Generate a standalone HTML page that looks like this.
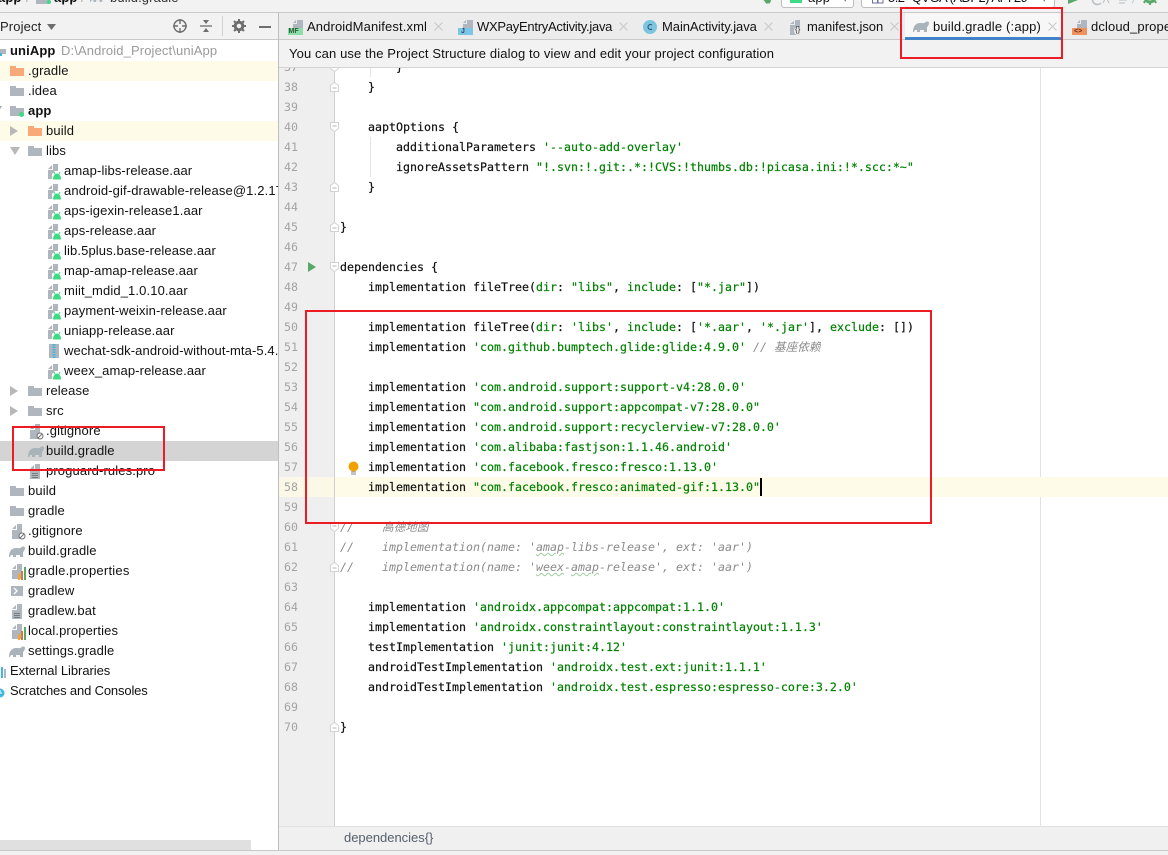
<!DOCTYPE html>
<html><head><meta charset="utf-8"><title>build.gradle</title>
<style>
html,body{margin:0;padding:0}
body{width:1168px;height:855px;overflow:hidden;position:relative;background:#fff;font-family:"Liberation Sans","Noto Sans CJK SC",sans-serif;font-size:13px;color:#111;letter-spacing:.12px}
.a{position:absolute}
.t{position:absolute;white-space:pre;line-height:16px}
svg{position:absolute;overflow:visible}
.row{position:absolute;left:0;width:278px;height:20px;line-height:20px;white-space:pre}
.row span{position:absolute;top:0}
.mono{font-family:"DejaVu Sans Mono","Noto Sans CJK SC",monospace;font-size:11.63px;letter-spacing:0}
#code{position:absolute;line-height:20px;white-space:pre;color:#111;-webkit-text-stroke:.2px currentColor}
#nums{position:absolute;line-height:20px;white-space:pre;color:#a3a3a3}
#code i{color:#8a8a8a;-webkit-text-stroke:0}
#code b{font-weight:normal;color:#008000}
.sq{text-decoration:underline wavy #9fce9f 1px}
.box{position:absolute;border:2px solid #ed1c24;box-sizing:border-box}
</style></head><body>
<svg width="0" height="0" style="position:absolute">
<defs>
<symbol id="folder" viewBox="0 0 14 10"><path d="M0 0h6v2h8v8H0z" fill="#afb6bd"/></symbol>
<symbol id="ofolder" viewBox="0 0 14 10"><path d="M0 0h6v2h8v8H0z" fill="#f9a878"/></symbol>
<symbol id="aar" viewBox="0 0 13 16"><path d="M0 5 4 1v4zM5 0h5v7H7L4 10v5H0V6h5z" fill="#afb6bd"/><path d="M5 15.500c0-4 2-6 4-6s4 2 4 6z" fill="#3ddc84"/><path d="M6 8l1 2M12 8l-1 2" stroke="#3ddc84"/></symbol>
<symbol id="doc" viewBox="0 0 12 16"><path d="M0 5 4 1v4zM5 0h5v15H0V6h5z" fill="#afb6bd"/><path d="M2 9.500h6M2 11.500h6M2 13.500h6" stroke="#666" stroke-width=".7"/></symbol>
<symbol id="ign" viewBox="0 0 14 16"><path d="M0 5 4 1v4zM5 0h5v10H8v5H0V6h5z" fill="#afb6bd"/><circle cx="10" cy="12" r="3" fill="#fff" stroke="#6e6e6e" stroke-width="1"/><path d="M8 14l4-4" stroke="#6e6e6e"/></symbol>
<symbol id="prop" viewBox="0 0 14 16"><path d="M0 5 4 1v4zM5 0h5v15H0V6h5z" fill="#afb6bd"/><path d="M6 10h2v6H6z" fill="#f4a13a"/><path d="M9 7h2v9H9z" fill="#e0752d"/><path d="M12 3h2v13h-2z" fill="#59a869"/></symbol>
<symbol id="ele" viewBox="0 0 16 11"><path d="M0 11C0 5 3 2 7 2c3 0 4 .5 5-.5s3-1.500 4 0c0 2-1 4-2 4.500v5h-3V9H7v2H4V9H2l-1 2z" fill="#a9b3ba"/></symbol>
<symbol id="cl" viewBox="0 0 9 9"><path d="M.5.5l8 8M8.5.5l-8 8" stroke="#c8c8c8" stroke-width="1" fill="none"/></symbol>
<symbol id="fs" viewBox="0 0 9 10"><path d="M.5.5h8v6l-4 3-4-3z" fill="#fff" stroke="#d2d2d2"/><path d="M2.500 4h4" stroke="#b5b5b5"/></symbol>
<symbol id="fe" viewBox="0 0 9 10"><path d="M.5 9.500h8v-6l-4-3-4 3z" fill="#fff" stroke="#d2d2d2"/><path d="M2.500 6h4" stroke="#b5b5b5"/></symbol>
</defs></svg>

<!-- top bar -->
<div class="a" style="left:0;top:0;width:1168px;height:12px;background:#f2f2f2"></div>
<div class="a" style="left:0;top:0;width:1168px;height:12px;overflow:hidden">
<div class="t" style="left:-2px;top:-10px;font-weight:bold">app</div>
<div class="t" style="left:26px;top:-10px;color:#aaa">/</div>
<svg style="left:36px;top:-6px" width="14" height="10"><use href="#folder"/></svg>
<svg style="left:47px;top:0" width="4" height="4"><circle cx="2" cy="2" r="2" fill="#3ddc84"/></svg>
<div class="t" style="left:54px;top:-10px;font-weight:bold">app</div>
<div class="t" style="left:81px;top:-10px;color:#aaa">/</div>
<svg style="left:90px;top:-8px" width="14" height="10"><use href="#ele"/></svg>
<div class="t" style="left:110px;top:-10px;color:#333">build.gradle</div>
<svg style="left:762px;top:-3px" width="10" height="8"><path d="M1 0l4 5 3-2-2 3" stroke="#59a869" stroke-width="3" fill="none"/></svg>
<div class="a" style="left:781px;top:-6px;width:73px;height:14px;border:1px solid #bdbdbd;border-radius:3px;background:#fff;box-sizing:border-box"></div>
<div class="a" style="left:790px;top:-4px;width:12px;height:7px;background:#3ddc84"></div>
<div class="t" style="left:808px;top:-10px">app</div>
<div class="t" style="left:842px;top:-10px;color:#777">▾</div>
<div class="a" style="left:861px;top:-6px;width:194px;height:14px;border:1px solid #bdbdbd;border-radius:3px;background:#fff;box-sizing:border-box"></div>
<svg style="left:872px;top:-3px" width="12" height="7"><path d="M.5-3h5v9h-5zM6 1h5v5H6z" stroke="#6e6e9e" fill="none"/></svg>
<div class="t" style="left:888px;top:-10px;letter-spacing:-.52px">5.2" QVGA (ADP2) API 29</div>
<div class="t" style="left:1041px;top:-10px;color:#777">▾</div>
<svg style="left:1068px;top:-3px" width="11" height="8"><path d="M0-2l10 5L0 7z" fill="#59a869"/></svg>
<svg style="left:1092px;top:-3px" width="20" height="8"><path d="M9-1a5 5 0 1 0 0 7" stroke="#b9bec2" stroke-width="1.600" fill="none"/><path d="M11 6l3-6 3 6" stroke="#b9bec2" fill="none"/></svg>
<svg style="left:1119px;top:-3px" width="18" height="8"><path d="M0 0h10M0 3h8M0 6h6" stroke="#c4c9cc" stroke-width="1.200"/><path d="M13 1a3 3 0 0 1 0 5" stroke="#c4c9cc" fill="none"/></svg>
<svg style="left:1144px;top:-3px" width="13" height="8"><circle cx="6" cy="0" r="5" fill="none" stroke="#59a869" stroke-width="3"/><path d="M6 6v2M1 4l-1 2M11 4l1 2" stroke="#59a869" stroke-width="2"/></svg>
</div>
<div class="a" style="left:0;top:12px;width:1168px;height:1px;background:#c9c9c9"></div>

<!-- project panel -->
<div class="a" style="left:0;top:13px;width:278px;height:26px;background:#f2f2f2"></div>
<div class="a" style="left:0;top:39px;width:278px;height:1px;background:#c9c9c9"></div>
<div class="t" style="left:0;top:19px;color:#222">Project</div>
<svg style="left:47px;top:24px" width="9" height="6"><path d="M0 0h9L4.500 6z" fill="#6e6e6e"/></svg>
<svg style="left:173px;top:19px" width="14" height="14"><circle cx="7" cy="7" r="6" fill="none" stroke="#6e6e6e" stroke-width="1.400"/><path d="M7 0v5M7 9v5M0 7h5M9 7h5" stroke="#6e6e6e" stroke-width="1.400"/></svg>
<svg style="left:200px;top:19px" width="12" height="14"><path d="M0 7h12" stroke="#6e6e6e" stroke-width="1.300"/><path d="M3 1h6L6 5zM3 13h6L6 9z" fill="#6e6e6e"/></svg>
<div class="a" style="left:222px;top:16px;width:1px;height:20px;background:#d0d0d0"></div>
<svg style="left:232px;top:19px" width="14" height="14"><circle cx="7" cy="7" r="3.800" fill="none" stroke="#6e6e6e" stroke-width="3"/><path d="M7 0v3M7 11v3M0 7h3M11 7h3M2 2l2 2M10 10l2 2M12 2l-2 2M4 10l-2 2" stroke="#6e6e6e" stroke-width="2"/></svg>
<div class="a" style="left:259px;top:26px;width:12px;height:1.500px;background:#6e6e6e"></div>

<div class="a" style="left:0;top:40px;width:278px;height:810px;background:#fff;overflow:hidden">
<div class="a" style="left:0;top:21px;width:278px;height:20px;background:#fefce9"></div>
<div class="a" style="left:0;top:81px;width:278px;height:20px;background:#fefce9"></div>
<div class="a" style="left:0;top:401px;width:278px;height:20px;background:#d4d4d4"></div>
<div class="a" style="left:0;top:800px;width:251px;height:10px;background:#e0e0e0"></div>

<svg style="left:-5px;top:7px" width="12" height="10"><path d="M0 0h5v2h6v5H0z" fill="#afb6bd"/><path d="M0 6h7v3H0z" fill="#40b6e0"/></svg>
<div class="row" style="top:1px"><span style="left:10px;font-weight:bold">uniApp</span><span style="left:61px;color:#9a9a9a">D:\Android_Project\uniApp</span></div>
<svg style="left:10px;top:26px" width="14" height="10"><use href="#ofolder"/></svg>
<div class="row" style="top:21px"><span style="left:28px">.gradle</span></div>
<svg style="left:10px;top:46px" width="14" height="10"><use href="#folder"/></svg>
<div class="row" style="top:41px"><span style="left:28px">.idea</span></div>
<svg style="left:10px;top:66px" width="14" height="10"><use href="#folder"/></svg>
<svg style="left:19px;top:72px" width="5" height="5"><circle cx="2.500" cy="2.500" r="2.500" fill="#3ddc84"/></svg>
<svg style="left:-3px;top:66px" width="6" height="6"><path d="M0 0h5L2.500 4z" fill="#aaa"/></svg>
<div class="row" style="top:61px"><span style="left:28px;font-weight:bold">app</span></div>
<svg style="left:10px;top:86px" width="8" height="10"><path d="M0 0l8 5-8 5z" fill="#b8b8b8"/></svg>
<svg style="left:28px;top:86px" width="14" height="10"><use href="#ofolder"/></svg>
<div class="row" style="top:81px"><span style="left:46px">build</span></div>
<svg style="left:10px;top:107px" width="10" height="8"><path d="M0 0h10L5 8z" fill="#b8b8b8"/></svg>
<svg style="left:28px;top:106px" width="14" height="10"><use href="#folder"/></svg>
<div class="row" style="top:101px"><span style="left:46px">libs</span></div>

<svg style="left:48px;top:124px" width="13" height="16"><use href="#aar"/></svg><div class="row" style="top:121px"><span style="left:64px">amap-libs-release.aar</span></div>
<svg style="left:48px;top:144px" width="13" height="16"><use href="#aar"/></svg><div class="row" style="top:141px"><span style="left:64px">android-gif-drawable-release@1.2.17.aar</span></div>
<svg style="left:48px;top:164px" width="13" height="16"><use href="#aar"/></svg><div class="row" style="top:161px"><span style="left:64px">aps-igexin-release1.aar</span></div>
<svg style="left:48px;top:184px" width="13" height="16"><use href="#aar"/></svg><div class="row" style="top:181px"><span style="left:64px">aps-release.aar</span></div>
<svg style="left:48px;top:204px" width="13" height="16"><use href="#aar"/></svg><div class="row" style="top:201px"><span style="left:64px">lib.5plus.base-release.aar</span></div>
<svg style="left:48px;top:224px" width="13" height="16"><use href="#aar"/></svg><div class="row" style="top:221px"><span style="left:64px">map-amap-release.aar</span></div>
<svg style="left:48px;top:244px" width="13" height="16"><use href="#aar"/></svg><div class="row" style="top:241px"><span style="left:64px">miit_mdid_1.0.10.aar</span></div>
<svg style="left:48px;top:264px" width="13" height="16"><use href="#aar"/></svg><div class="row" style="top:261px"><span style="left:64px">payment-weixin-release.aar</span></div>
<svg style="left:48px;top:284px" width="13" height="16"><use href="#aar"/></svg><div class="row" style="top:281px"><span style="left:64px">uniapp-release.aar</span></div>
<svg style="left:49px;top:304px" width="11" height="14"><path d="M0 0h10v14H0z" fill="#afb6bd"/><path d="M5 0v14" stroke="#40b6e0" stroke-width="3" stroke-dasharray="1.500 1"/></svg><div class="row" style="top:301px"><span style="left:64px;letter-spacing:.1px">wechat-sdk-android-without-mta-5.4.0.jar</span></div>
<svg style="left:48px;top:324px" width="13" height="16"><use href="#aar"/></svg><div class="row" style="top:321px"><span style="left:64px">weex_amap-release.aar</span></div>

<svg style="left:10px;top:346px" width="8" height="10"><path d="M0 0l8 5-8 5z" fill="#b8b8b8"/></svg>
<svg style="left:28px;top:346px" width="14" height="10"><use href="#folder"/></svg>
<div class="row" style="top:341px"><span style="left:46px">release</span></div>
<svg style="left:10px;top:366px" width="8" height="10"><path d="M0 0l8 5-8 5z" fill="#b8b8b8"/></svg>
<svg style="left:28px;top:366px" width="14" height="10"><use href="#folder"/></svg>
<div class="row" style="top:361px"><span style="left:46px">src</span></div>
<svg style="left:30px;top:384px" width="14" height="16"><use href="#ign"/></svg>
<div class="row" style="top:381px"><span style="left:46px">.gitignore</span></div>
<svg style="left:28px;top:406px" width="16" height="11"><use href="#ele"/></svg>
<div class="row" style="top:401px"><span style="left:46px">build.gradle</span></div>
<svg style="left:30px;top:424px" width="12" height="16"><use href="#doc"/></svg>
<div class="row" style="top:421px"><span style="left:46px">proguard-rules.pro</span></div>

<svg style="left:10px;top:446px" width="14" height="10"><use href="#folder"/></svg>
<div class="row" style="top:441px"><span style="left:28px">build</span></div>
<svg style="left:10px;top:466px" width="14" height="10"><use href="#folder"/></svg>
<div class="row" style="top:461px"><span style="left:28px">gradle</span></div>
<svg style="left:12px;top:484px" width="14" height="16"><use href="#ign"/></svg>
<div class="row" style="top:481px"><span style="left:28px">.gitignore</span></div>
<svg style="left:9px;top:506px" width="16" height="11"><use href="#ele"/></svg>
<div class="row" style="top:501px"><span style="left:28px">build.gradle</span></div>
<svg style="left:12px;top:524px" width="14" height="16"><use href="#prop"/></svg>
<div class="row" style="top:521px"><span style="left:28px;letter-spacing:.24px">gradle.properties</span></div>
<svg style="left:11px;top:546px" width="12" height="10"><path d="M0 0h12v10H0z" fill="#afb6bd"/><path d="M3 2l3 3-3 3" stroke="#fff" stroke-width="1.300" fill="none"/></svg>
<div class="row" style="top:541px"><span style="left:28px">gradlew</span></div>
<svg style="left:12px;top:564px" width="12" height="16"><use href="#doc"/></svg>
<div class="row" style="top:561px"><span style="left:28px">gradlew.bat</span></div>
<svg style="left:12px;top:584px" width="14" height="16"><use href="#prop"/></svg>
<div class="row" style="top:581px"><span style="left:28px">local.properties</span></div>
<svg style="left:9px;top:606px" width="16" height="11"><use href="#ele"/></svg>
<div class="row" style="top:601px"><span style="left:28px">settings.gradle</span></div>
<svg style="left:1px;top:626px" width="5" height="12"><path d="M0 1h2v11H0z" fill="#40b6e0"/><path d="M3 3h2v9H3z" fill="#afb6bd"/></svg>
<div class="row" style="top:621px"><span style="left:10px;letter-spacing:-.05px">External Libraries</span></div>
<svg style="left:-3px;top:647px" width="10" height="11"><circle cx="3" cy="6" r="4.500" fill="#40b6e0"/><path d="M3 3v3h2" stroke="#fff" fill="none"/></svg>
<div class="row" style="top:641px"><span style="left:10px;letter-spacing:-.15px">Scratches and Consoles</span></div>
</div>
<div class="a" style="left:278px;top:13px;width:1px;height:837px;background:#bdbdbd"></div>

<!-- tabs -->
<div class="a" style="left:279px;top:13px;width:889px;height:26px;background:#ececec"></div>
<div class="a" style="left:905px;top:13px;width:157px;height:24px;background:#f7f7f7"></div>
<div class="a" style="left:905px;top:37px;width:157px;height:3px;background:#4083c9"></div>
<div class="a" style="left:279px;top:39px;width:626px;height:1px;background:#c9c9c9"></div>
<div class="a" style="left:1062px;top:39px;width:106px;height:1px;background:#c9c9c9"></div>

<svg style="left:288px;top:20px" width="15" height="15"><path d="M5 3 8 0v3zM9 0h6v8H5V4h4z" fill="#afb6bd"/><path d="M0 8h15v7H0z" fill="#8ddda8"/></svg>
<div class="t" style="left:288.500px;top:28px;font-size:7px;font-weight:bold;color:#2a5a3a;letter-spacing:0;line-height:8px">MF</div>
<div class="t" style="left:307px;top:19px">AndroidManifest.xml</div>
<svg style="left:434px;top:22px" width="9" height="9"><use href="#cl"/></svg>
<svg style="left:458px;top:20px" width="15" height="15"><path d="M5 3 8 0v3zM9 0h6v8H5V4h4z" fill="#afb6bd"/><path d="M0 8h15v7H0z" fill="#7cc5e5"/></svg>
<div class="t" style="left:461px;top:28px;font-size:7px;font-weight:bold;color:#24506a;letter-spacing:0;line-height:8px">J</div>
<div class="t" style="left:477px;top:19px;letter-spacing:-.27px">WXPayEntryActivity.java</div>
<svg style="left:619px;top:22px" width="9" height="9"><use href="#cl"/></svg>
<svg style="left:643px;top:20px" width="14" height="14"><circle cx="7" cy="7" r="7" fill="#7cc5e0"/><path d="M9 5a2.500 2.500 0 1 0 0 4" stroke="#2b5a70" stroke-width="1.100" fill="none"/></svg>
<div class="t" style="left:662px;top:19px;letter-spacing:-.06px">MainActivity.java</div>
<svg style="left:764px;top:22px" width="9" height="9"><use href="#cl"/></svg>
<svg style="left:790px;top:20px" width="13" height="15"><path d="M0 4 4 1v3zM5 0h5v15H0V5h5z" fill="#afb6bd"/><circle cx="8" cy="11" r="4" fill="#ececec"/></svg>
<div class="t" style="left:795px;top:24px;font-size:8px;letter-spacing:0;color:#333;line-height:12px">{}</div>
<div class="t" style="left:807px;top:19px;letter-spacing:-.03px">manifest.json</div>
<svg style="left:890px;top:22px" width="9" height="9"><use href="#cl"/></svg>
<svg style="left:913px;top:21px" width="16" height="11"><use href="#ele"/></svg>
<div class="t" style="left:933px;top:19px;letter-spacing:.17px">build.gradle (:app)</div>
<svg style="left:1048px;top:22px" width="9" height="9"><use href="#cl"/></svg>
<svg style="left:1072px;top:20px" width="15" height="15"><path d="M5 3 8 0v3zM9 0h6v8H5V4h4z" fill="#afb6bd"/><path d="M0 8h15v7H0z" fill="#f0905a"/></svg>
<div class="t" style="left:1074px;top:28px;font-size:7px;font-weight:bold;color:#5a2a10;letter-spacing:0;line-height:8px">&lt;&gt;</div>
<div class="a" style="left:1091px;top:13px;width:77px;height:26px;overflow:hidden"><div class="t" style="left:0;top:6px">dcloud_properties.xml</div></div>

<!-- notification -->
<div class="a" style="left:279px;top:40px;width:889px;height:27px;background:#f2f2f2"></div>
<div class="a" style="left:279px;top:67px;width:889px;height:1px;background:#d4d4d4"></div>
<div class="t" style="left:289px;top:46px">You can use the Project Structure dialog to view and edit your project configuration</div>

<!-- editor -->
<div class="a" style="left:279px;top:68px;width:55px;height:758px;background:#efefef"></div>
<div class="a" style="left:334px;top:68px;width:1px;height:758px;background:#d0d0d0"></div>
<div class="a" style="left:1040px;top:68px;width:1px;height:758px;background:#e2e2e2"></div>
<div class="a" style="left:279px;top:477px;width:55px;height:20px;background:#fbf8e7"></div>
<div class="a" style="left:335px;top:477px;width:833px;height:20px;background:#fefce9"></div>
<div class="a" style="left:370px;top:68px;width:1px;height:9px;background:#e4e4e4"></div>
<div class="a" style="left:370px;top:137px;width:1px;height:40px;background:#e4e4e4"></div>

<div class="a" style="left:279px;top:68px;width:889px;height:758px;overflow:hidden">
<div class="mono" id="nums" style="left:5px;top:-11px">37
38
39
40
41
42
43
44
45
46
47
48
49
50
51
52
53
54
55
56
57
58
59
60
61
62
63
64
65
66
67
68
69
70</div>
<div class="mono" id="code" style="left:61px;top:-11px">        }
    }

    aaptOptions {
        additionalParameters <b>'--auto-add-overlay'</b>
        ignoreAssetsPattern <b>"!.svn:!.git:.*:!CVS:!thumbs.db:!picasa.ini:!*.scc:*~"</b>
    }

}

dependencies {
    implementation fileTree(<b>dir</b>: <b>"libs"</b>, <b>include</b>: [<b>"*.jar"</b>])

    implementation fileTree(<b>dir</b>: <b>'libs'</b>, <b>include</b>: [<b>'*.aar'</b>, <b>'*.jar'</b>], <b>exclude</b>: [])
    implementation <b>'com.github.bumptech.glide:glide:4.9.0'</b> <i>// 基座依赖</i>

    implementation <b>'com.android.support:support-v4:28.0.0'</b>
    implementation <b>"com.android.support:appcompat-v7:28.0.0"</b>
    implementation <b>'com.android.support:recyclerview-v7:28.0.0'</b>
    implementation <b>'com.alibaba:fastjson:1.1.46.android'</b>
    implementation <b>'com.facebook.fresco:fresco:1.13.0'</b>
    implementation <b>"com.facebook.fresco:animated-gif:1.13.0"</b>

<i>//    高德地图</i>
<i>//    implementation(name: '<span class="sq">amap</span>-libs-release', ext: 'aar')</i>
<i>//    implementation(name: '<span class="sq">weex</span>-<span class="sq">amap</span>-release', ext: 'aar')</i>

    implementation <b>'androidx.appcompat:appcompat:1.1.0'</b>
    implementation <b>'androidx.constraintlayout:constraintlayout:1.1.3'</b>
    testImplementation <b>'junit:junit:4.12'</b>
    androidTestImplementation <b>'androidx.test.ext:junit:1.1.1'</b>
    androidTestImplementation <b>'androidx.test.espresso:espresso-core:3.2.0'</b>

}</div>
</div>
<div class="a" style="left:760px;top:478px;width:2px;height:18px;background:#000"></div>

<div class="a" style="left:330px;top:68px;width:9px;height:4px;overflow:hidden"><svg style="left:0;top:-6px" width="9" height="10"><use href="#fs"/></svg></div>
<svg style="left:330px;top:82px" width="9" height="10"><use href="#fe"/></svg>
<svg style="left:330px;top:122px" width="9" height="10"><use href="#fs"/></svg>
<svg style="left:330px;top:182px" width="9" height="10"><use href="#fe"/></svg>
<svg style="left:330px;top:222px" width="9" height="10"><use href="#fe"/></svg>
<svg style="left:330px;top:262px" width="9" height="10"><use href="#fs"/></svg>
<svg style="left:330px;top:522px" width="9" height="10"><use href="#fs"/></svg>
<svg style="left:330px;top:562px" width="9" height="10"><use href="#fe"/></svg>
<svg style="left:330px;top:722px" width="9" height="10"><use href="#fe"/></svg>
<svg style="left:308px;top:262px" width="8" height="10"><path d="M0 0l8 5-8 5z" fill="#59a869"/></svg>
<svg style="left:347px;top:461px" width="13" height="15"><circle cx="6.500" cy="5.500" r="5" fill="#f2a000"/><path d="M4 11h5M4 13h5" stroke="#888"/></svg>

<!-- breadcrumb -->
<div class="a" style="left:279px;top:826px;width:889px;height:24px;background:#f0f0f0;border-top:1px solid #e0e0e0;box-sizing:border-box"></div>
<div class="t" style="left:344px;top:830px;color:#56606c;letter-spacing:-.02px">dependencies{}</div>
<div class="a" style="left:0;top:850px;width:1168px;height:1px;background:#c9c9c9"></div>
<div class="a" style="left:0;top:851px;width:1168px;height:4px;background:#f2f2f2"></div>

<!-- red annotation boxes -->
<div class="box" style="left:900px;top:7px;width:163px;height:52px"></div>
<div class="box" style="left:305px;top:310px;width:627px;height:214px"></div>
<div class="box" style="left:12px;top:426px;width:153px;height:45px"></div>
</body></html>
